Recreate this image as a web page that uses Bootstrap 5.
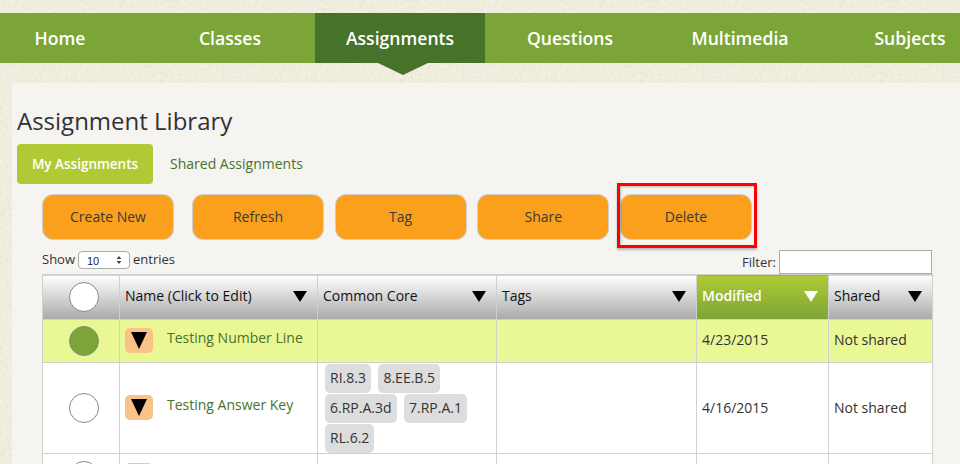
<!DOCTYPE html>
<html lang="en">
<head>
<meta charset="utf-8">
<title>Assignment Library</title>
<link href="https://cdn.jsdelivr.net/npm/bootstrap@5.3.0/dist/css/bootstrap.min.css" rel="stylesheet">
<style>
html,body{height:464px;overflow:hidden}
body{font-family:"Open Sans","Liberation Sans",sans-serif;color:#333;font-size:14px;background-color:#f1eee0;
background-image:url("data:image/svg+xml,%3Csvg xmlns='http://www.w3.org/2000/svg' width='240' height='240'%3E%3Cfilter id='n'%3E%3CfeTurbulence type='fractalNoise' baseFrequency='.35' numOctaves='3' stitchTiles='stitch'/%3E%3CfeColorMatrix values='0 0 0 0 .55 0 0 0 0 .53 0 0 0 0 .45 0 0 0 1.6 -.85'/%3E%3C/filter%3E%3Crect width='240' height='240' filter='url(%23n)' opacity='.55'/%3E%3C/svg%3E");padding-top:13px}
.topbar{background:#7ca537;height:50px}
.topbar-list{margin:0;padding:0;list-style:none;display:flex}
.topbar-item{width:170px;flex:none;height:50px;line-height:50px;text-align:center;position:relative;font-size:17.6px;font-weight:600;color:#fff}
.topbar-item:first-child{width:145px;padding-right:25px}
.topbar-item:last-child{width:135px;padding-left:35px}
.topbar-item.on{background:#47722a}
.topbar-item.on::after{content:"";position:absolute;left:63px;top:50px;border-style:solid;border-width:12px 25px 0;border-color:#47722a transparent transparent}
.panel-main{margin:20px 0 0 12px;background:#f5f4f1;height:381px;padding:21px 28px 0 5px}
.page-title{font-size:24px;line-height:34px;font-weight:400;color:#2f3338;margin:0 0 6px}
.tabset{display:flex;height:40px;align-items:center;margin:0}
.tab-on{width:136px;height:40px;line-height:40px;text-align:center;background:#b0ca35;color:#fff;font-weight:600;border-radius:4px;font-size:13.5px}
.tab-off{margin-left:17px;color:#47722a;font-weight:500;font-size:14px;padding-bottom:2px}
.tools{display:flex;gap:10.67px;margin:10px 0 0 25px}
.tool{width:132px;height:46px;padding:0 0 2px;background:#fba01c;border:1px solid #cfcfcf;border-radius:11px;color:#3a3a3a;font-size:14px}
.tools>.tool:first-child{margin-right:7.33px}
.tool-wrap{position:relative;display:block}
.tool-wrap::after{content:"";position:absolute;left:-3px;right:-5px;top:-11px;bottom:-8px;border:3px solid #f00;box-shadow:0 2px 2px rgba(0,0,0,.25),inset 1px 1px 2px rgba(0,0,0,.25)}
.listbar{display:flex;justify-content:space-between;margin:10px 0 0 25px;height:24px;font-size:13px;color:#333}
.lenlabel{display:flex;align-items:flex-start;gap:3px;line-height:19px}
.lensel{appearance:none;-webkit-appearance:none;width:52px;height:18px;margin-top:1px;border:1px solid #aaa;border-radius:4px;font-size:11px;padding:0 0 0 8px;color:#223;font-family:"Liberation Sans",sans-serif;
background:#fff url("data:image/svg+xml,%3Csvg xmlns='http://www.w3.org/2000/svg' width='6' height='10'%3E%3Cpath d='M3 1l2.4 3H.6zM3 9L.6 6h4.8z' fill='%23444'/%3E%3C/svg%3E") no-repeat right 7px center}
.filterlabel{display:flex;align-items:flex-start;gap:3px;line-height:24px}
.filterbox{width:153px;height:24px;border:1px solid #aaa;background:#fff;padding:0}
.table-wrap{margin-left:25px}
.grid-table{table-layout:fixed;width:890px;margin:0;border-collapse:collapse;--bs-table-bg:transparent;border-color:#d0d0d0;color:#333}
.grid-table>*>tr>*{border:1px solid #d0d0d0;padding:0 5px 2px;vertical-align:middle;font-size:14px;line-height:20px;background:#fff;color:#333;box-shadow:none}
.grid-table>tbody>tr>td.pillcell{padding:0 5px}
.grid-table>tbody>tr>td.lowcell{padding-bottom:0}
.grid-table>thead>tr>th{background:linear-gradient(#fff,#a9a9a9);font-weight:400;color:#111;height:45px}
.grid-table>thead>tr>th.sorted{background:linear-gradient(#b0ca35,#7ca537);color:#fff;font-weight:600}
.grid-table>tbody>tr.picked>td{background:#e9f795}
.headcell{display:flex;justify-content:space-between;align-items:center;padding-right:5px}
.tri{width:0;height:0;border-style:solid;border-width:11px 7.5px 0;border-color:#000 transparent transparent;flex:none}
.sorted .tri{border-top-color:#fff}
.dot{display:block;width:30px;height:30px;border-radius:50%;border:1px solid #888;background:#fff;margin:0 0 0 21px;position:relative;top:1px}
.dot.full{background:#7ca537}
.namecell{display:flex;align-items:flex-start}
.dropbox{width:28px;height:25px;background:#f9c387;border-radius:5px;display:flex;align-items:center;justify-content:center;flex:none}
.dropbox .tri{border-width:17px 8px 0}
.assign-name{margin-left:14px;color:#47722a;font-weight:500;line-height:20px}
.pillset{display:flex;flex-wrap:wrap;gap:1px 7.5px;margin:0 0 0 2px}
.ccpill{background:#ddd;border-radius:5px;padding:0 5px;line-height:28px;height:29px;color:#333;font-size:14px}
</style>
</head>
<body>
<nav class="topbar">
  <ul class="topbar-list">
    <li class="topbar-item">Home</li>
    <li class="topbar-item">Classes</li>
    <li class="topbar-item on">Assignments</li>
    <li class="topbar-item">Questions</li>
    <li class="topbar-item">Multimedia</li>
    <li class="topbar-item">Subjects</li>
  </ul>
</nav>
<main class="panel-main">
  <h1 class="page-title">Assignment Library</h1>
  <div class="tabset">
    <div class="tab-on">My Assignments</div>
    <div class="tab-off">Shared Assignments</div>
  </div>
  <div class="tools">
    <button class="tool" type="button">Create New</button>
    <button class="tool" type="button">Refresh</button>
    <button class="tool" type="button">Tag</button>
    <button class="tool" type="button">Share</button>
    <span class="tool-wrap"><button class="tool" type="button">Delete</button></span>
  </div>
  <div class="listbar">
    <label class="lenlabel">Show <select class="lensel"><option>10</option></select> entries</label>
    <label class="filterlabel">Filter: <input class="filterbox" type="text"></label>
  </div>
  <div class="table-wrap">
  <table class="table grid-table">
    <colgroup><col style="width:77px"><col style="width:198px"><col style="width:179px"><col style="width:200px"><col style="width:132px"><col style="width:104px"></colgroup>
    <thead>
      <tr>
        <th><span class="dot"></span></th>
        <th><div class="headcell">Name (Click to Edit)<span class="tri"></span></div></th>
        <th><div class="headcell">Common Core<span class="tri"></span></div></th>
        <th><div class="headcell">Tags<span class="tri"></span></div></th>
        <th class="sorted"><div class="headcell">Modified<span class="tri"></span></div></th>
        <th><div class="headcell">Shared<span class="tri"></span></div></th>
      </tr>
    </thead>
    <tbody>
      <tr class="picked" style="height:43px">
        <td><span class="dot full"></span></td>
        <td><div class="namecell"><span class="dropbox"><span class="tri"></span></span><span class="assign-name">Testing Number Line</span></div></td>
        <td></td><td></td><td>4/23/2015</td><td>Not shared</td>
      </tr>
      <tr style="height:91px">
        <td><span class="dot"></span></td>
        <td><div class="namecell"><span class="dropbox"><span class="tri"></span></span><span class="assign-name">Testing Answer Key</span></div></td>
        <td class="pillcell"><div class="pillset"><span class="ccpill">RI.8.3</span><span class="ccpill">8.EE.B.5</span><span class="ccpill">6.RP.A.3d</span><span class="ccpill">7.RP.A.1</span><span class="ccpill">RL.6.2</span></div></td>
        <td></td><td class="lowcell">4/16/2015</td><td class="lowcell">Not shared</td>
      </tr>
      <tr style="height:45px">
        <td><span class="dot"></span></td>
        <td><div class="namecell"><span class="dropbox"><span class="tri"></span></span></div></td>
        <td></td><td></td><td></td><td></td>
      </tr>
    </tbody>
  </table>
  </div>
</main>
<script src="https://cdn.jsdelivr.net/npm/bootstrap@5.3.0/dist/js/bootstrap.bundle.min.js"></script>
</body>
</html>
